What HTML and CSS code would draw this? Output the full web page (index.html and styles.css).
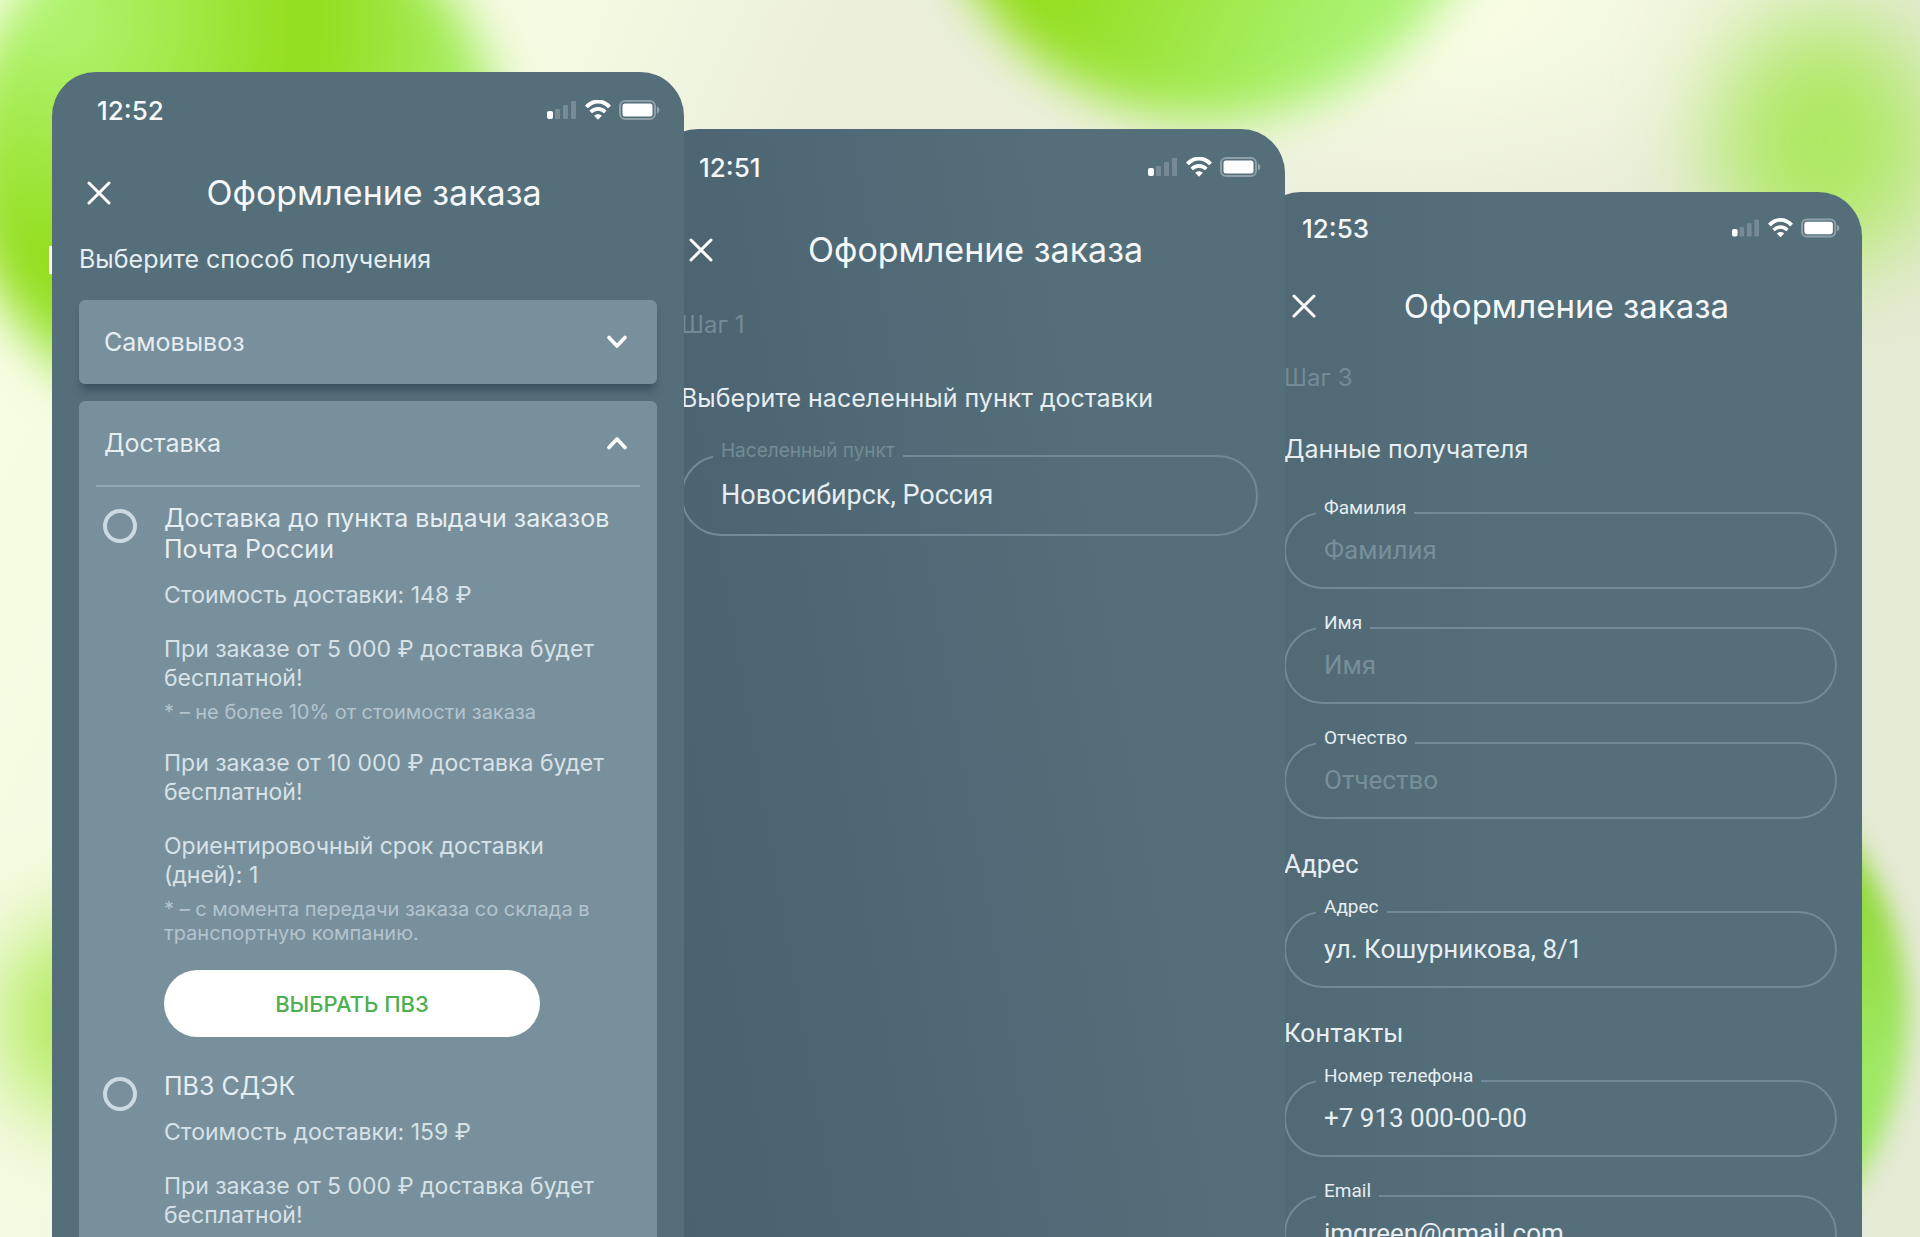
FILE: index.html
```html
<!DOCTYPE html>
<html lang="ru">
<head>
  <meta charset="UTF-8" />
  <meta name="viewport" content="width=device-width" />
  <title>Оформление заказа</title>
  <link rel="stylesheet" href="styles.css">
</head>

<body>
  <!-- Shared icons -->
  <svg class="sprite" aria-hidden="true">
    <symbol id="icon-signal" viewBox="0 0 30 20">
      <rect x="0" y="11" width="6" height="8" rx="2" fill="#fff" />
      <rect x="8" y="9" width="5" height="10" rx="1" fill="#fff" opacity=".2" />
      <rect x="16" y="5" width="5" height="14" rx="1" fill="#fff" opacity=".2" />
      <rect x="24" y="1" width="5" height="18" rx="1" fill="#fff" opacity=".2" />
    </symbol>
    <symbol id="icon-wifi" viewBox="0 0 26 20">
      <path d="M1.500 7C8-.2 18-.2 24.500 7" fill="none" stroke="#fff" stroke-width="4" />
      <path d="M5.700 12c4.200-4.200 10.400-4.200 14.600 0" fill="none" stroke="#fff" stroke-width="3.600" />
      <path d="M9.200 15.700c2.200-2 5.400-2 7.600 0L13 19.700z" fill="#fff" />
    </symbol>
    <symbol id="icon-battery" viewBox="0 0 41 20">
      <rect x="1" y="1" width="35" height="18" rx="5" fill="none" stroke="#fff" stroke-width="2" opacity=".35" />
      <rect x="3.500" y="3.500" width="30" height="13" rx="2.500" fill="#fff" />
      <path d="M38 6.500c3 1.500 3 5.500 0 7z" fill="#fff" opacity=".4" />
    </symbol>
    <symbol id="icon-close" viewBox="0 0 24 24">
      <path d="M2 2l20 20M22 2L2 22" fill="none" stroke="#fff" stroke-width="3" stroke-linecap="round" />
    </symbol>
    <symbol id="icon-down" viewBox="0 0 20 14">
      <path d="M2 2.500l8 8.500 8-8.500" fill="none" stroke="#fff" stroke-width="3.600" stroke-linecap="round" stroke-linejoin="round" />
    </symbol>
    <symbol id="icon-up" viewBox="0 0 20 14">
      <path d="M2 11.500L10 3l8 8.500" fill="none" stroke="#fff" stroke-width="3.600" stroke-linecap="round" stroke-linejoin="round" />
    </symbol>
  </svg>

  <div class="blob blob-1"></div>
  <div class="blob blob-2"></div>
  <div class="blob blob-3"></div>
  <div class="blob blob-4"></div>
  <div class="blob blob-5"></div>

  <main class="screens">
    <section class="screen screen-method">
      <div class="status">
        <span class="time">12:52</span>
        <svg class="signal"><use href="#icon-signal" /></svg>
        <svg class="wifi"><use href="#icon-wifi" /></svg>
        <svg class="battery"><use href="#icon-battery" /></svg>
      </div>
      <header class="header">
        <button type="button" class="close" aria-label="Закрыть"><svg><use href="#icon-close" /></svg></button>
        <h1>Оформление заказа</h1>
      </header>
      <h2>Выберите способ получения</h2>

      <div class="card card-closed">
        <button type="button" class="card-head">Самовывоз<svg><use href="#icon-down" /></svg></button>
      </div>

      <div class="card card-open">
        <button type="button" class="card-head">Доставка<svg><use href="#icon-up" /></svg></button>
        <div class="options">
          <div class="option">
            <input type="radio" name="delivery" id="post" />
            <div class="option-body">
              <label for="post">Доставка до пункта выдачи заказов Почта России</label>
              <p class="price">Стоимость доставки: 148 ₽</p>
              <p>При заказе от 5 000 ₽ доставка будет бесплатной!</p>
              <p class="note">* – не более 10% от стоимости заказа</p>
              <p>При заказе от 10 000 ₽ доставка будет бесплатной!</p>
              <p>Ориентировочный срок доставки (дней): 1</p>
              <p class="note">* – с момента передачи заказа со склада в транспортную компанию.</p>
              <button type="button" class="choose">ВЫБРАТЬ ПВЗ</button>
            </div>
          </div>
          <div class="option">
            <input type="radio" name="delivery" id="cdek" />
            <div class="option-body">
              <label for="cdek">ПВЗ СДЭК</label>
              <p class="price">Стоимость доставки: 159 ₽</p>
              <p>При заказе от 5 000 ₽ доставка будет бесплатной!</p>
            </div>
          </div>
        </div>
      </div>
    </section>

    <section class="screen screen-city">
      <div class="status">
        <span class="time">12:51</span>
        <svg class="signal"><use href="#icon-signal" /></svg>
        <svg class="wifi"><use href="#icon-wifi" /></svg>
        <svg class="battery"><use href="#icon-battery" /></svg>
      </div>
      <header class="header">
        <button type="button" class="close" aria-label="Закрыть"><svg><use href="#icon-close" /></svg></button>
        <h1>Оформление заказа</h1>
      </header>
      <p class="step">Шаг 1</p>
      <h2>Выберите населенный пункт доставки</h2>
      <fieldset class="field">
        <legend><label for="city">Населенный пункт</label></legend>
        <input type="text" id="city" value="Новосибирск, Россия" />
      </fieldset>
    </section>

    <section class="screen screen-data">
      <div class="status">
        <span class="time">12:53</span>
        <svg class="signal"><use href="#icon-signal" /></svg>
        <svg class="wifi"><use href="#icon-wifi" /></svg>
        <svg class="battery"><use href="#icon-battery" /></svg>
      </div>
      <header class="header">
        <button type="button" class="close" aria-label="Закрыть"><svg><use href="#icon-close" /></svg></button>
        <h1>Оформление заказа</h1>
      </header>
      <p class="step">Шаг 3</p>
      <h2>Данные получателя</h2>
      <fieldset class="field">
        <legend><label for="surname">Фамилия</label></legend>
        <input type="text" id="surname" placeholder="Фамилия" />
      </fieldset>
      <fieldset class="field">
        <legend><label for="name">Имя</label></legend>
        <input type="text" id="name" placeholder="Имя" />
      </fieldset>
      <fieldset class="field">
        <legend><label for="patronymic">Отчество</label></legend>
        <input type="text" id="patronymic" placeholder="Отчество" />
      </fieldset>
      <h3>Адрес</h3>
      <fieldset class="field">
        <legend><label for="address">Адрес</label></legend>
        <input type="text" id="address" value="ул. Кошурникова, 8/1" />
      </fieldset>
      <h3>Контакты</h3>
      <fieldset class="field">
        <legend><label for="phone">Номер телефона</label></legend>
        <input type="tel" id="phone" value="+7 913 000-00-00" />
      </fieldset>
      <fieldset class="field">
        <legend><label for="email">Email</label></legend>
        <input type="email" id="email" value="imgreen@gmail.com" />
      </fieldset>
    </section>
  </main>
</body>
</html>
```

FILE: styles.css
```css
* {
  box-sizing: border-box;
}

body {
  margin: 0;
  height: 100vh;
  position: relative;
  overflow: hidden;
  font-family: Inter, "Noto Sans", sans-serif;
  color: #e6eef1;
  background:
    radial-gradient(ellipse 480px 220px at 74% 0, #f7fce3 20%, transparent),
    linear-gradient(115deg, #f7fee3 0%, #f4fae1 24%, #ebefdc 34%, #ebefdb 60%, #e5ead4 85%);
}

h1,
h2,
h3,
p {
  margin: 0;
  font-weight: 400;
}

button {
  font: inherit;
  color: inherit;
  border: 0;
  padding: 0;
  background: none;
  cursor: pointer;
}

.sprite {
  position: absolute;
  width: 0;
  height: 0;
}

/* Background shapes */
.blob {
  position: absolute;
  border-radius: 50%;
}

.blob-1 {
  left: -36px;
  top: -110px;
  width: 540px;
  height: 540px;
  background: radial-gradient(circle at 96px 130px, #b2f576 0, #92dd1a 250px, #a8ef68 420px);
  filter: blur(24px);
}

.blob-2 {
  left: 930px;
  top: -440px;
  width: 560px;
  height: 560px;
  background: linear-gradient(115deg, #93dd1c 38%, #aaf272 78%);
  filter: blur(24px);
}

.blob-3 {
  right: -15px;
  top: 15px;
  width: 220px;
  height: 250px;
  background: #ade862;
  filter: blur(48px);
}

.blob-4 {
  right: 13px;
  top: 715px;
  width: 600px;
  height: 600px;
  background: linear-gradient(170deg, #92d93c 40%, #a0e866 65%);
  filter: blur(12px);
}

.blob-5 {
  left: 0;
  top: 920px;
  width: 200px;
  height: 200px;
  background: #aeea55;
  filter: blur(44px);
}

/* Phones */
.screens {
  position: relative;
  display: grid;
  grid-template-columns: 632fr 601fr 577fr;
  grid-template-rows: minmax(0, 1fr);
  height: 100%;
  padding: 0 58px 0 52px;
}

/* Side button of the first phone */
.screens::before {
  content: "";
  position: absolute;
  left: 49px;
  top: 246px;
  width: 3px;
  height: 28px;
  background: #fff;
}

.screen {
  position: relative;
  display: flex;
  flex-direction: column;
  overflow: hidden;
  padding: 0 27px;
  border-radius: 44px 44px 0 0;
  background: #546e7a;
}

.screen > * {
  flex: none;
}

.screen-method {
  z-index: 3;
  margin-top: 72px;
}

.screen-city {
  z-index: 2;
  margin: 129px 0 0 -30px;
  background: linear-gradient(80deg, #4a6170 0%, #4c6472 20%, #546e7a 70%);
}

.screen-data {
  z-index: 1;
  margin: 192px 0 0 -28px;
  padding-right: 25px;
  background: linear-gradient(90deg, #506975 0%, #546e7a 40%);
}

.status {
  display: flex;
  align-items: center;
  gap: 8px;
  height: 76px;
  padding-left: 18px;
  margin-right: -3px;
}

.time {
  flex: 1;
  font-size: 26px;
  font-weight: 500;
  color: #f4f8f9;
}

.signal {
  width: 30px;
  height: 20px;
}

.wifi {
  width: 26px;
  height: 20px;
}

.battery {
  width: 41px;
  height: 20px;
}

.header {
  display: grid;
  grid-template-columns: 40px 1fr 28px;
  align-items: center;
  height: 89px;
}

.close {
  display: flex;
  padding-left: 8px;
}

.close svg {
  width: 24px;
  height: 24px;
}

h1 {
  font-size: 34px;
  line-height: 40px;
  text-align: center;
  color: #f4f8f9;
}

h2,
h3 {
  font-size: 25px;
  line-height: 32px;
}

.step {
  font-size: 24px;
  line-height: 32px;
  color: #748b96;
}

/* Delivery cards */
.screen-method h2 {
  margin: 6px 0 25px;
}

.card {
  border-radius: 6px;
  background: #78909c;
}

.card-closed {
  margin-bottom: 17px;
  box-shadow: 0 9px 8px -3px rgba(40, 60, 75, .6);
}

.card-open {
  flex: 1 0 auto;
  border-radius: 6px 6px 0 0;
}

.card-head {
  display: flex;
  align-items: center;
  justify-content: space-between;
  width: 100%;
  height: 84px;
  padding: 0 30px 0 25px;
  font-size: 25px;
  text-align: left;
}

.card-head svg {
  width: 20px;
  height: 14px;
}

.options {
  display: flex;
  flex-direction: column;
  gap: 34px;
  margin: 0 17px;
  padding-top: 16px;
  border-top: 2px solid #8fa8b3;
}

.option {
  display: flex;
  align-items: flex-start;
  gap: 27px;
}

.option input {
  flex: none;
  appearance: none;
  width: 34px;
  height: 34px;
  margin: 6px 0 0 7px;
  border: 4px solid #cbdae1;
  border-radius: 50%;
}

.option-body {
  flex: 1;
  min-width: 0;
}

.option label {
  display: block;
  font-size: 25px;
  line-height: 31px;
}

.option p {
  margin-top: 25px;
  padding-right: 20px;
  font-size: 23px;
  line-height: 29px;
  color: #d7e2e7;
}

.option .price {
  margin-top: 16px;
}

.option .note {
  margin-top: 7px;
  font-size: 20px;
  line-height: 24px;
  color: #b4c4cc;
}

.choose {
  display: block;
  width: 376px;
  height: 67px;
  margin-top: 25px;
  border-radius: 34px;
  background: #fff;
  color: #4caf50;
  font-size: 22px;
  font-weight: 500;
}

/* Outlined fields */
.field {
  min-width: 0;
  margin: 0;
  padding: 0 38px 0 30px;
  border: 2px solid #708b97;
  border-radius: 40px;
}

.field legend {
  height: 34px;
  padding: 0 8px;
  font-size: 19px;
  line-height: 24px;
}

.field input {
  display: block;
  width: 100%;
  height: 57px;
  padding: 0 0 18px 8px;
  border: 0;
  outline: none;
  background: none;
  color: #e6eef1;
  font-family: Roboto, sans-serif;
  font-size: 26px;
}

.field input::placeholder {
  color: #788f9a;
  opacity: 1;
}

.screen-city .step {
  margin-top: 15px;
}

.screen-city h2 {
  margin: 41px 0 25px;
}

.screen-city legend {
  color: #748b96;
}

.screen-city .field input {
  height: 61px;
  font-size: 27px;
}

.screen-data .status {
  height: 72px;
}

.screen-data .signal {
  width: 28px;
}

.screen-data .wifi {
  width: 25px;
}

.screen-data .battery {
  width: 39px;
}

.screen-data .header {
  height: 84px;
}

.screen-data h1 {
  font-size: 33px;
}

.screen-data .step {
  margin-top: 14px;
}

.screen-data h2 {
  margin: 39px 0 31px;
}

.screen-data h3 {
  margin: 29px 0 15px;
  font-family: Roboto, sans-serif;
  font-size: 26px;
}

.screen-data .field + .field {
  margin-top: 22px;
}

.screen-data legend {
  font-family: Roboto, sans-serif;
}
```
